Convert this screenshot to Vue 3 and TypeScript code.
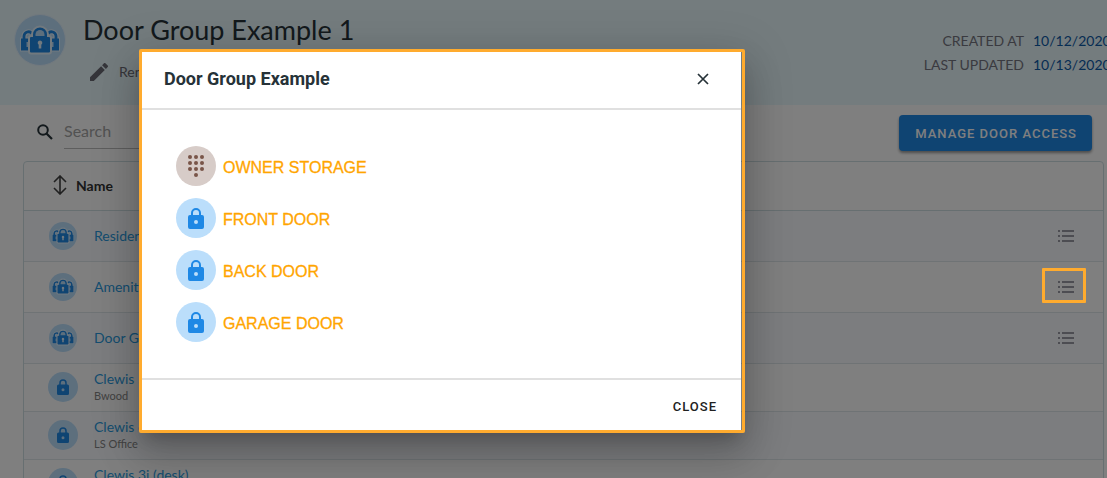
<script setup lang="ts">
import { ref } from 'vue'

interface Row {
  name: string
  note?: string
  group: boolean
}

interface Door {
  name: string
  kind: 'keypad' | 'lock'
}

const search = ref('')

const rows: Row[] = [
  { name: 'Residents', group: true },
  { name: 'Amenity', group: true },
  { name: 'Door Group', group: true },
  { name: 'Clewis 5i', note: 'Bwood', group: false },
  { name: 'Clewis 6i', note: 'LS Office', group: false },
  { name: 'Clewis 3i (desk)', note: 'LS Office', group: false },
]

const doors: Door[] = [
  { name: 'OWNER STORAGE', kind: 'keypad' },
  { name: 'FRONT DOOR', kind: 'lock' },
  { name: 'BACK DOOR', kind: 'lock' },
  { name: 'GARAGE DOOR', kind: 'lock' },
]

const keypadDots = [
  [2, 2], [8, 2], [14, 2],
  [2, 8], [8, 8], [14, 8],
  [2, 14], [8, 14], [14, 14],
  [8, 20],
]
</script>

<template>
  <div class="page">
    <svg class="defs" aria-hidden="true">
      <symbol id="locks" viewBox="0 0 40 30">
        <g fill="none" stroke="#e3f2fd" stroke-width="5">
          <path d="M4 13v-2a4.500 4.500 0 0 1 8-2.500M36 13v-2a4.500 4.500 0 0 0-8-2.500" />
        </g>
        <path d="M1 13.500h10v12H1zM29 13.500h10v12H29z" fill="#1e88e5" stroke="#e3f2fd" stroke-width="2" />
        <g fill="none" stroke="#1e88e5" stroke-width="2.800">
          <path d="M4 15v-4a4.500 4.500 0 0 1 8-2.500" />
          <path d="M36 15v-4a4.500 4.500 0 0 0-8-2.500" />
        </g>
        <path d="M1 13.500h10v12H1zM29 13.500h10v12H29z" fill="#1e88e5" />
        <path d="M6.500 17h2v5h-2zM31.500 17h2v5h-2z" fill="#bbdefb" />
        <path d="M12 11V9.500a8 8 0 0 1 16 0V11h1a2 2 0 0 1 2 2v13.500a2 2 0 0 1-2 2H11a2 2 0 0 1-2-2V13a2 2 0 0 1 2-2z" fill="#1e88e5" stroke="#e3f2fd" stroke-width="2" />
        <path d="M15.500 11V9.500a4.500 4.500 0 0 1 9 0V11z" fill="#bbdefb" />
        <path d="M20 15.500a2.300 2.300 0 0 1 1.300 4.200V23.500h-2.600v-3.800A2.300 2.300 0 0 1 20 15.500z" fill="#e3f2fd" />
      </symbol>
      <symbol id="lock" viewBox="0 0 16 21">
        <path d="M4 8V5a4 4 0 0 1 8 0v3" fill="none" stroke="#1e88e5" stroke-width="2" />
        <path fill-rule="evenodd" d="M2 7h12a2 2 0 0 1 2 2v10a2 2 0 0 1-2 2H2a2 2 0 0 1-2-2V9a2 2 0 0 1 2-2zM8 12a2 2 0 1 0 0 4 2 2 0 0 0 0-4z" fill="#1e88e5" />
      </symbol>
    </svg>

    <header class="banner">
      <span class="avatar avatar-large"><svg class="locks-large"><use href="#locks" /></svg></span>
      <div class="heading">
        <h1>Door Group Example 1</h1>
        <button class="rename" type="button">
          <svg viewBox="0 0 18 18" width="18" height="18"><path fill="#6b6b75" d="M0 14.200V18h3.800L14.800 6.900l-3.700-3.700zM17.700 4a1 1 0 0 0 0-1.400L15.400.3a1 1 0 0 0-1.400 0l-1.900 1.900 3.800 3.700z" /></svg>
          Rename
        </button>
      </div>
      <dl class="meta">
        <dt>CREATED AT</dt><dd>10/12/2020</dd>
        <dt>LAST UPDATED</dt><dd>10/13/2020</dd>
      </dl>
    </header>

    <div class="toolbar">
      <label class="search">
        <svg viewBox="0 0 16 16" width="16" height="16"><circle cx="6" cy="6" r="4.800" fill="none" stroke="#263238" stroke-width="2" /><path d="M9.500 9.500l5.500 5.500" stroke="#263238" stroke-width="2.200" /></svg>
        <input v-model="search" type="text" placeholder="Search" aria-label="Search">
      </label>
      <button class="manage" type="button">MANAGE DOOR ACCESS</button>
    </div>

    <div class="table-card">
      <table>
        <thead>
          <tr>
            <th scope="col">
              <button class="sort" type="button">
                <svg viewBox="0 0 14 20" width="14" height="20"><path d="M7 1v18M1 7l6-6 6 6M1 13l6 6 6-6" fill="none" stroke="#424242" stroke-width="1.600" /></svg>
                Name
              </button>
            </th>
            <th scope="col" aria-label="Details"></th>
          </tr>
        </thead>
        <tbody>
          <tr v-for="row in rows" :key="row.name" :class="{ group: row.group }">
            <td>
              <div class="entry">
                <span class="icon-slot">
                  <span v-if="row.group" class="avatar avatar-group"><svg class="locks-small"><use href="#locks" /></svg></span>
                  <span v-else class="avatar avatar-door"><svg class="lock-small"><use href="#lock" /></svg></span>
                </span>
                <div class="names">
                  <a href="#">{{ row.name }}</a>
                  <small v-if="row.note">{{ row.note }}</small>
                </div>
              </div>
            </td>
            <td class="actions">
              <button v-if="row.group" type="button" aria-label="Show doors">
                <svg viewBox="0 0 16 12" width="16" height="12"><path d="M0 1h2M4 1h12M0 6h2M4 6h12M0 11h2M4 11h12" stroke="#9a9aa5" stroke-width="2" /></svg>
              </button>
            </td>
          </tr>
        </tbody>
      </table>
    </div>

    <div class="scrim">
      <div class="outline">
        <section class="dialog" role="dialog" aria-labelledby="dialog-title">
          <div class="dialog-head">
            <h2 id="dialog-title">Door Group Example</h2>
            <button type="button" aria-label="Close dialog">
              <svg viewBox="0 0 12 12" width="12" height="12"><path d="M1 1l10 10M11 1L1 11" stroke="#263238" stroke-width="1.700" /></svg>
            </button>
          </div>
          <ul>
            <li v-for="door in doors" :key="door.name">
              <span class="door-icon" :class="door.kind">
                <svg v-if="door.kind === 'keypad'" viewBox="0 0 16 22" width="16" height="22">
                  <circle v-for="([x, y], i) in keypadDots" :key="i" :cx="x" :cy="y" r="2" fill="#795548" />
                </svg>
                <svg v-else width="16" height="21"><use href="#lock" /></svg>
              </span>
              <span class="door-name">{{ door.name }}</span>
            </li>
          </ul>
          <div class="dialog-foot"><button type="button">CLOSE</button></div>
        </section>
      </div>
      <span class="marker"></span>
    </div>
  </div>
</template>

<style>
body {
  margin: 0;
}
</style>

<style scoped>
.page {
  position: relative;
  height: 100vh;
  overflow: hidden;
  background: #fff;
  font-family: Lato, "Open Sans", sans-serif;
}
.defs {
  position: absolute;
  width: 0;
  height: 0;
}
button {
  border: 0;
  padding: 0;
  background: none;
  font: inherit;
  color: inherit;
}
svg {
  display: block;
}
.banner {
  display: flex;
  align-items: flex-start;
  height: 105px;
  box-sizing: border-box;
  padding: 14px 0 0 14px;
  background: #e8f8fc;
}
.avatar {
  display: flex;
  flex: none;
  align-items: center;
  justify-content: center;
  box-sizing: border-box;
  border-radius: 50%;
  background: #bbdefb;
}
.avatar-large {
  width: 52px;
  height: 52px;
  border: 1px solid #e3f2fd;
}
.locks-large {
  width: 40px;
  height: 30px;
}
.heading {
  flex: 1;
  padding-left: 17px;
}
h1 {
  margin: 0;
  font-size: 27px;
  font-weight: 400;
  line-height: 32px;
  color: #263238;
}
.rename {
  display: flex;
  align-items: center;
  gap: 11px;
  margin-top: 16px;
  padding-left: 7px;
  font-size: 14px;
  line-height: 20px;
  color: #6b6b75;
}
.meta {
  display: grid;
  grid-template-columns: auto 74px;
  column-gap: 9px;
  margin: 15px 0 0;
  font-size: 14px;
  line-height: 24px;
  white-space: nowrap;
  text-align: right;
  color: #757580;
}
.meta dd {
  margin: 0;
  text-align: left;
  color: #0d5aa7;
}
.toolbar {
  display: flex;
  align-items: flex-start;
  justify-content: space-between;
  height: 56px;
  box-sizing: border-box;
  padding: 10px 15px 0 37px;
}
.search {
  display: flex;
  align-items: center;
  gap: 11px;
}
.search input {
  width: 240px;
  height: 34px;
  box-sizing: border-box;
  border: 0;
  border-bottom: 1px solid #bdbdbd;
  padding: 0 0 2px;
  background: none;
  font: 16px Lato, sans-serif;
}
.search input::placeholder {
  color: #a4a4a4;
  opacity: 1;
}
.manage {
  height: 36px;
  padding: 0 15px 0 16px;
  border-radius: 4px;
  background: #1e88e5;
  box-shadow: 0 2px 3px rgba(0, 0, 0, 0.4);
  font: 500 13px Roboto, sans-serif;
  letter-spacing: 1px;
  color: #fff;
}
.table-card {
  margin: 0 3px 0 23px;
  border: 1px solid #cfdfe3;
  border-radius: 4px;
}
table {
  width: 100%;
  border-collapse: separate;
  border-spacing: 0;
}
th,
td {
  padding: 0 0 2px;
  text-align: left;
  border-bottom: 1px solid #dfe6ea;
}
th {
  height: 46px;
  border-color: #cfdfe3;
}
.sort {
  display: flex;
  align-items: center;
  gap: 9px;
  padding-left: 29px;
  font-size: 14px;
  font-weight: 700;
  color: #333;
}
td {
  height: 45px;
}
.group td {
  height: 49px;
  padding-bottom: 1px;
}
tbody tr:nth-child(odd) {
  background: #f8fbff;
}
.entry {
  display: flex;
  align-items: center;
  gap: 16px;
  padding-left: 24px;
}
.icon-slot {
  display: flex;
  justify-content: center;
  width: 30px;
}
.avatar-group {
  width: 28px;
  height: 28px;
}
.avatar-door {
  width: 30px;
  height: 30px;
}
.locks-small {
  width: 22px;
  height: 17px;
}
.lock-small {
  width: 12px;
  height: 16px;
}
.names {
  display: flex;
  flex-direction: column;
}
.names a {
  font-size: 14px;
  line-height: 18px;
  text-decoration: none;
  color: #2b9be0;
}
.names small {
  font-size: 11px;
  line-height: 16px;
  color: #858585;
}
.actions button {
  display: block;
  margin-left: auto;
  margin-right: 29px;
}
.scrim {
  position: absolute;
  inset: 0;
  padding: 49px 0 0 139px;
  background: rgba(0, 0, 0, 0.5);
}
.outline {
  width: 600px;
  border: 3px solid #ffab2e;
  border-radius: 2px;
  box-shadow: 0 11px 15px -7px rgba(0, 0, 0, 0.2), 0 24px 38px 3px rgba(0, 0, 0, 0.14), 0 9px 46px 8px rgba(0, 0, 0, 0.12);
}
.dialog {
  margin-right: 1px;
  background: #fff;
  font-family: Roboto, sans-serif;
  color: #263238;
}
.dialog-head {
  display: flex;
  align-items: center;
  justify-content: space-between;
  height: 54px;
  padding: 0 32px 2px 22px;
  border-bottom: 2px solid #e0e0e0;
}
h2 {
  margin: 0;
  font-size: 18px;
  font-weight: 700;
  line-height: 24px;
}
.dialog ul {
  display: flex;
  flex-direction: column;
  gap: 12px;
  margin: 0;
  padding: 36px 34px;
  list-style: none;
}
.dialog li {
  display: flex;
  align-items: center;
  gap: 7px;
}
.door-icon {
  display: flex;
  align-items: center;
  justify-content: center;
  width: 40px;
  height: 40px;
  border-radius: 50%;
  background: #bbdefb;
}
.door-icon.keypad {
  background: #d7ccc8;
}
.door-name {
  padding-top: 4px;
  font: 16px/20px "Liberation Sans", Arial, sans-serif;
  color: #ffa500;
  -webkit-text-stroke: 0.3px #ffa500;
}
.dialog-foot {
  display: flex;
  justify-content: flex-end;
  height: 48px;
  padding: 2px 24px 0 0;
  border-top: 2px solid #e0e0e0;
}
.dialog-foot button {
  font-size: 13px;
  font-weight: 500;
  letter-spacing: 1px;
  color: #212121;
}
.marker {
  position: absolute;
  top: 268px;
  right: 21px;
  width: 38px;
  height: 29px;
  border: 3px solid #ffab2e;
  border-radius: 1px;
}
</style>
